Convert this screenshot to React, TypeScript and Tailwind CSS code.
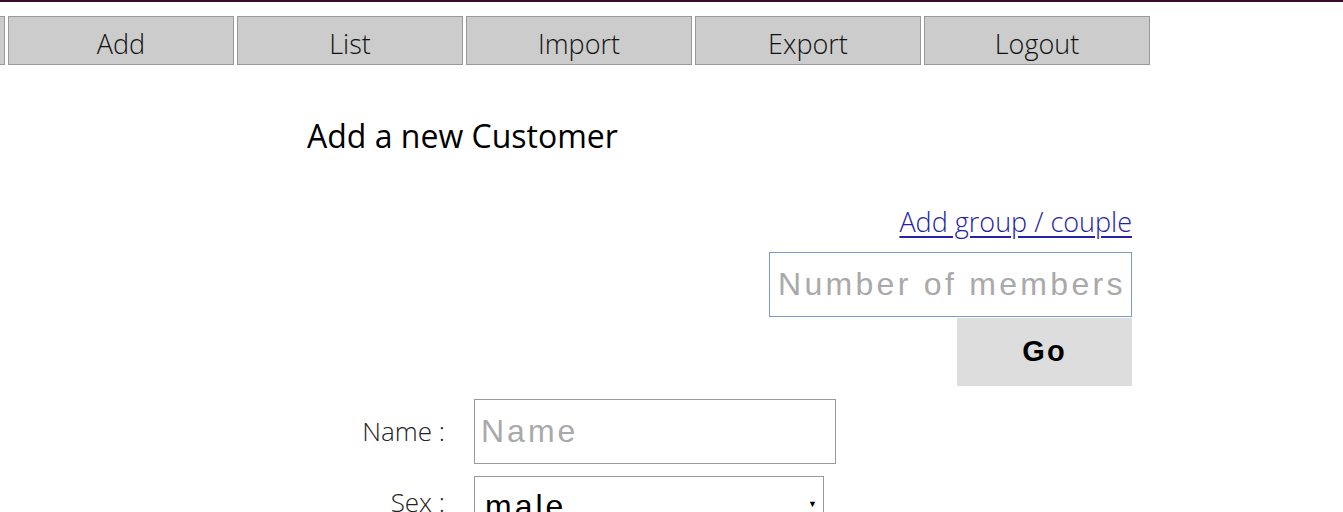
import type { ReactNode } from 'react'

const NAV = ['', 'Add', 'List', 'Import', 'Export', 'Logout']

function NavButton({ children }: { children: ReactNode }) {
  return (
    <button className="w-[226px] h-[49px] shrink-0 border border-[#999] bg-[#cccccc] pt-[7px] text-[27px] font-light leading-[36px] text-[#111]">
      {children}
    </button>
  )
}

function FormRow({ label, lift, children }: { label: string; lift?: boolean; children: ReactNode }) {
  return (
    <div className="flex items-center">
      <label className={lift ? 'mb-[12px] w-[446px] pr-[1px] text-right text-[26px] font-light text-[#222]' : 'w-[446px] pr-[1px] text-right text-[26px] font-light text-[#222]'}>
        {label}
      </label>
      <div className="ml-[28px]">{children}</div>
    </div>
  )
}

export default function App() {
  return (
    <div className="h-[512px] overflow-hidden border-t-2 border-[#3b0b2b] bg-white font-['Open_Sans',sans-serif]">
      <nav className="mt-[14px] ml-[-221px] flex gap-[3px]">
        {NAV.map((n, i) => (
          <NavButton key={i}>{n}</NavButton>
        ))}
      </nav>

      <h1 className="mt-[50px] pl-[307px] text-[32px] leading-[42px] text-black">
        Add a new Customer
      </h1>

      <div className="mt-[47px] flex w-[1132px] flex-col items-end">
        <a href="#" className="text-[27px] font-light leading-[36px] text-[#2323a8] underline underline-offset-[4px]">
          Add group / couple
        </a>
        <input
          autoFocus
          placeholder="Number of members"
          className="mt-[12px] h-[65px] w-[363px] border border-[#7a9cc6] px-[8px] font-['Liberation_Sans',sans-serif] text-[32px] tracking-[3.3px] text-black outline-none placeholder:text-[#a9a9a9]"
        />
        <button className="mt-[1px] h-[68px] w-[175px] bg-[#dddddd] font-['Liberation_Sans',sans-serif] text-[29px] font-bold tracking-[2px] text-black">
          Go
        </button>
      </div>

      <div className="mt-[13px] flex flex-col gap-[12px]">
        <FormRow label="Name :">
          <input
            placeholder="Name"
            className="h-[65px] w-[362px] border border-[#999] px-[6px] font-['Liberation_Sans',sans-serif] text-[32px] tracking-[3px] text-black outline-none placeholder:text-[#a9a9a9]"
          />
        </FormRow>
        <FormRow label="Sex :" lift>
          <div className="relative h-[65px] w-[350px] border border-[#999]">
            <select className="h-[58px] w-full appearance-none bg-white px-[10px] font-['Liberation_Sans',sans-serif] text-[32px] tracking-[3px] text-black outline-none">
              <option>male</option>
              <option>female</option>
            </select>
            <span className="pointer-events-none absolute right-[6px] top-[20px] text-[9px] text-black">▼</span>
          </div>
        </FormRow>
      </div>
    </div>
  )
}
